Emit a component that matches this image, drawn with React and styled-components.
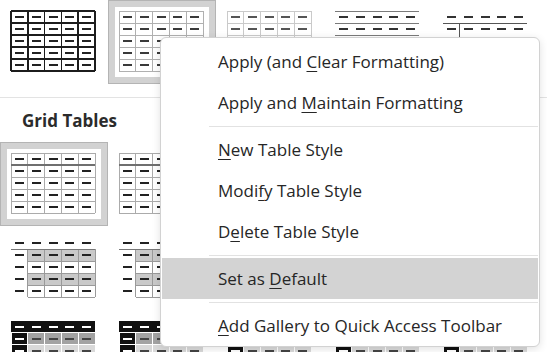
import React from 'react';
import styled, { createGlobalStyle } from 'styled-components';

const GlobalStyle = createGlobalStyle`
  html, body {
    margin: 0;
    background: #fff;
  }
  body {
    font-family: "Open Sans", "Noto Sans", sans-serif;
  }
`;

const W = 84;
const H = 60;
const CW = W / 5;
const RH = 12;
const idx = [0, 1, 2, 3, 4];

function dash(r, c, color) {
  return (
    <rect
      key={`d${r}${c}`}
      x={c * CW + (CW - 9) / 2}
      y={r * RH + RH / 2 - 1}
      width={9}
      height={2}
      fill={color}
    />
  );
}

function hLine(y, x1, x2, color, sw = 1) {
  return <line key={`h${y}${x1}${sw}`} x1={x1} x2={x2} y1={y} y2={y} stroke={color} strokeWidth={sw} />;
}

function vLine(x, y1, y2, color, sw = 1) {
  return <line key={`v${x}${y1}`} x1={x} x2={x} y1={y1} y2={y2} stroke={color} strokeWidth={sw} />;
}

function fullGrid(color, sw) {
  const out = [];
  [0, 1, 2, 3, 4, 5].forEach((i) => {
    out.push(hLine(i * RH, 0, W, color, sw));
    out.push(vLine(i * CW, 0, H, color, sw));
  });
  return out;
}

function allDashes(color, skip = () => false) {
  const out = [];
  idx.forEach((r) => idx.forEach((c) => { if (!skip(r, c)) out.push(dash(r, c, color)); }));
  return out;
}

function draw(variant) {
  switch (variant) {
    case 'grid':
      return [...fullGrid('#1c1c1c', 1.6), ...allDashes('#222')];
    case 'plain':
      return [...fullGrid('#b0b0b0', 1), ...allDashes('#3a3a3a')];
    case 'light':
      return [...fullGrid('#cacaca', 1), ...allDashes('#555')];
    case 'lines':
      return [
        ...[0, 1, 2, 3, 4, 5].map((i) => hLine(i * RH, 0, W, '#7a7a7a', 1)),
        ...allDashes('#333'),
      ];
    case 'header':
      return [
        hLine(RH, 0, W, '#555', 1),
        vLine(CW, RH, H, '#555', 1),
        ...allDashes('#333'),
      ];
    case 'gridHead':
      return [
        ...fullGrid('#ababab', 1),
        hLine(RH, 0, W, '#6f6f6f', 2.5),
        ...allDashes('#222'),
      ];
    case 'banded': {
      const out = [];
      [1, 3].forEach((r) => out.push(
        <rect key={`f${r}`} x={CW} y={r * RH} width={W - CW} height={RH} fill="#c9c9c9" />
      ));
      [1, 2, 3, 4, 5].forEach((i) => out.push(hLine(i * RH, CW, W, '#9a9a9a', 1)));
      [1, 2, 3, 4, 5].forEach((i) => out.push(vLine(i * CW, RH, H, '#9a9a9a', 1)));
      out.push(hLine(RH, 0, W, '#777', 1));
      return [...out, ...allDashes('#222')];
    }
    case 'dark': {
      const out = [];
      out.push(<rect key="hd" x={0} y={0} width={W} height={RH - 1} fill="#111" />);
      [1, 2, 3, 4].forEach((r) => idx.forEach((c) => {
        const fill = c === 0 ? '#111' : r % 2 ? '#a3a3a3' : '#d9d9d9';
        out.push(
          <rect key={`c${r}${c}`} x={c * CW + 0.5} y={r * RH} width={CW - 1} height={RH - 1} fill={fill} />
        );
      }));
      return [
        ...out,
        ...allDashes('#fff', (r, c) => !(r === 0 || c === 0)),
        ...allDashes('#444', (r, c) => r === 0 || c === 0),
      ];
    }
    default:
      return [];
  }
}

function TableThumb({ variant }) {
  return (
    <svg width={W + 2} height={H + 2} viewBox={`-1 -1 ${W + 2} ${H + 2}`} shapeRendering="crispEdges">
      {draw(variant)}
    </svg>
  );
}

const rows = {
  top: ['grid', 'plain', 'light', 'lines', 'header'],
  grid: ['gridHead', 'gridHead', 'gridHead', 'gridHead', 'gridHead'],
  banded: ['banded', 'banded', 'banded', 'banded', 'banded'],
  dark: ['dark', 'dark', 'dark', 'dark', 'dark'],
};

const menuItems = [
  { pre: 'Apply (and ', key: 'C', post: 'lear Formatting)' },
  { pre: 'Apply and ', key: 'M', post: 'aintain Formatting' },
  'sep',
  { pre: '', key: 'N', post: 'ew Table Style' },
  { pre: 'Modi', key: 'f', post: 'y Table Style' },
  { pre: 'D', key: 'e', post: 'lete Table Style' },
  'sep',
  { pre: 'Set as ', key: 'D', post: 'efault', active: true },
  'sep',
  { pre: '', key: 'A', post: 'dd Gallery to Quick Access Toolbar' },
];

export default function App() {
  return (
    <Page>
      <GlobalStyle />
      <Gallery>
        <ThumbRow>
          {rows.top.map((v, i) => (
            <Cell key={i} selected={i === 1}><TableThumb variant={v} /></Cell>
          ))}
        </ThumbRow>
        <Divider />
        <SectionTitle>Grid Tables</SectionTitle>
        <ThumbRow>
          {rows.grid.map((v, i) => (
            <Cell key={i} selected={i === 0}><TableThumb variant={v} /></Cell>
          ))}
        </ThumbRow>
        <ThumbRow>
          {rows.banded.map((v, i) => <Cell key={i}><TableThumb variant={v} /></Cell>)}
        </ThumbRow>
        <ThumbRow>
          {rows.dark.map((v, i) => <Cell key={i}><TableThumb variant={v} /></Cell>)}
        </ThumbRow>
      </Gallery>

      <Menu>
        {menuItems.map((it, i) =>
          it === 'sep' ? (
            <Separator key={i} />
          ) : (
            <MenuItem key={i} active={it.active}>
              <span>{it.pre}<u>{it.key}</u>{it.post}</span>
            </MenuItem>
          )
        )}
      </Menu>
    </Page>
  );
}

const Page = styled.div`
  position: relative;
  width: 547px;
  height: 352px;
  overflow: hidden;
  background: #fff;
`;

const Gallery = styled.div`
  display: flex;
  flex-direction: column;
`;

const ThumbRow = styled.div`
  display: grid;
  grid-template-columns: repeat(5, 108px);
`;

const Cell = styled.div`
  box-sizing: border-box;
  height: 84px;
  padding: 10px 0 0 10px;
  box-shadow: ${(p) =>
    p.selected ? 'inset 0 0 0 1px #b4b4b4, inset 0 0 0 7px #d2d2d2' : 'none'};

  svg {
    display: block;
  }
`;

const Divider = styled.div`
  height: 1px;
  margin-top: 13px;
  background: #e3e3e3;
`;

const SectionTitle = styled.div`
  margin: 12px 0 10px 22px;
  font-size: 17px;
  line-height: 22px;
  font-weight: 700;
  color: #2b2b2b;
`;

const Menu = styled.div`
  position: absolute;
  left: 160px;
  top: 37px;
  width: 380px;
  box-sizing: border-box;
  padding: 3px 1px 0;
  background: #fff;
  border: 1px solid #d2d2d2;
  border-radius: 6px;
  box-shadow: 0 2px 8px rgba(0, 0, 0, 0.12);
  display: flex;
  flex-direction: column;
`;

const MenuItem = styled.div`
  height: 41px;
  display: flex;
  align-items: center;
  padding-left: 56px;
  font-size: 17px;
  color: #262626;
  background: ${(p) => (p.active ? '#d3d3d3' : 'transparent')};
  white-space: nowrap;

  u {
    text-decoration-thickness: 1px;
    text-underline-offset: 3px;
  }
`;

const Separator = styled.div`
  height: 6px;
  display: flex;
  align-items: center;
  padding-left: 47px;

  &::after {
    content: '';
    flex: 1;
    height: 1px;
    background: #e2e2e2;
  }
`;
